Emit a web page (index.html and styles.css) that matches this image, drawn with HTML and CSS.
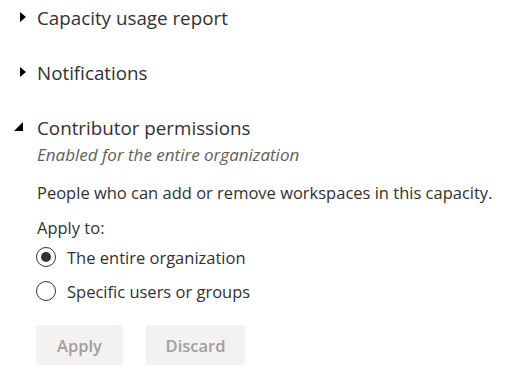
FILE: index.html
```html
<!DOCTYPE html>
<html>
<head>
<meta charset="utf-8">
<link rel="stylesheet" href="styles.css">
</head>
<body>
<div class="page">
  <div class="header">
    <span class="chev"><span class="tri-right"></span></span>
    <span class="title">Capacity usage report</span>
  </div>
  <div class="header gap">
    <span class="chev"><span class="tri-right"></span></span>
    <span class="title">Notifications</span>
  </div>
  <div class="header gap">
    <span class="chev"><span class="tri-open"></span></span>
    <span class="title">Contributor permissions</span>
  </div>
  <div class="content">
    <div class="subtitle">Enabled for the entire organization</div>
    <div class="desc">People who can add or remove workspaces in this capacity.</div>
    <div class="label">Apply to:</div>
    <div class="radios">
      <label class="radio"><span class="circle checked"></span><span>The entire organization</span></label>
      <label class="radio"><span class="circle"></span><span>Specific users or groups</span></label>
    </div>
    <div class="buttons">
      <button class="btn btn-apply">Apply</button>
      <button class="btn btn-discard">Discard</button>
    </div>
  </div>
</div>
</body>
</html>
```
FILE: styles.css
```css
html, body {
  margin: 0;
  padding: 0;
  background: #ffffff;
}
body {
  font-family: "Open Sans", "Noto Sans", sans-serif;
  color: #323130;
}
.page {
  padding-top: 4px;
}
.header {
  display: flex;
  align-items: center;
  height: 28px;
}
.header.gap {
  margin-top: 27px;
}
.chev {
  width: 37px;
  height: 28px;
  position: relative;
  flex: none;
}
.tri-right {
  position: absolute;
  left: 20px;
  top: 8px;
  width: 0;
  height: 0;
  border-top: 5px solid transparent;
  border-bottom: 5px solid transparent;
  border-left: 6px solid #000;
}
.tri-open {
  position: absolute;
  left: 14px;
  top: 8px;
  width: 0;
  height: 0;
  border-left: 9px solid transparent;
  border-bottom: 9px solid #000;
}
.title {
  font-size: 18.8px;
  line-height: 28px;
}
.content {
  padding-left: 37px;
  font-size: 16.5px;
}
.subtitle {
  margin-top: 2px;
  line-height: 22px;
  font-style: italic;
  font-size: 17px;
  color: #605e5c;
}
.desc {
  margin-top: 16px;
  line-height: 22px;
}
.label {
  margin-top: 13px;
  line-height: 22px;
}
.radios {
  margin-top: 4px;
  display: flex;
  flex-direction: column;
  gap: 6px;
}
.radio {
  display: flex;
  align-items: center;
  height: 28px;
  gap: 11px;
}
.circle {
  width: 18px;
  height: 18px;
  border: 1px solid #323130;
  border-radius: 50%;
  position: relative;
  flex: none;
  margin-left: -1px;
}
.circle.checked::after {
  content: "";
  position: absolute;
  left: 4px;
  top: 4px;
  width: 10px;
  height: 10px;
  border-radius: 50%;
  background: #323130;
}
.buttons {
  margin-top: 20px;
  display: flex;
  gap: 24px;
}
.btn {
  height: 40px;
  border: none;
  border-radius: 2px;
  background: #f3f2f1;
  color: #a19f9d;
  font-family: "Open Sans", "Noto Sans", sans-serif;
  font-size: 16.5px;
  font-weight: 600;
  padding: 0;
  margin-left: -1px;
}
.btn-apply {
  width: 87px;
}
.btn-discard {
  width: 99px;
}
```
